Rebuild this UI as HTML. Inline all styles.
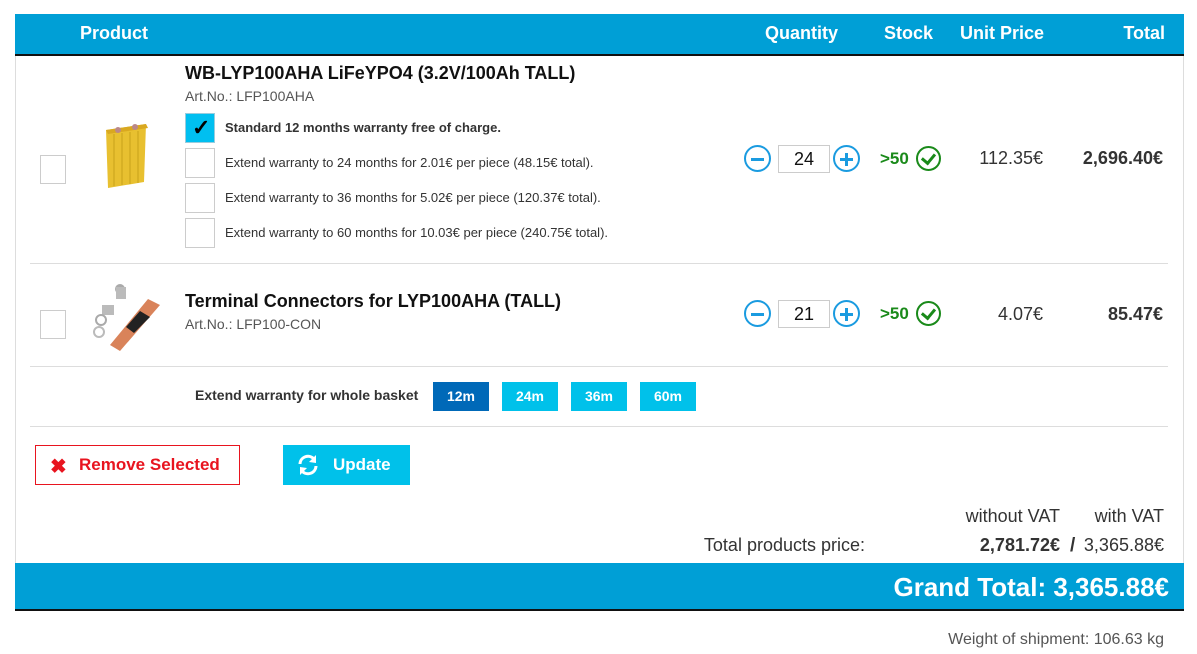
<!DOCTYPE html>
<html><head><meta charset="utf-8"><style>
*{margin:0;padding:0;box-sizing:border-box}
body{width:1197px;height:654px;background:#fff;font-family:"Liberation Sans",Arial,sans-serif;color:#333;position:relative;overflow:hidden}
.a{position:absolute;white-space:nowrap}
.hd{left:15px;top:14px;width:1169px;height:42px;background:#009fd6;border-bottom:2px solid #111}
.hd span{position:absolute;top:9px;color:#fff;font-weight:bold;font-size:18px}
.cb{position:absolute;width:30px;height:30px;border:1px solid #ccc;background:#fff}
.wt{font-size:13px;color:#333}
.qb{position:absolute;width:27px;height:27px;border:2px solid #1a9be0;border-radius:50%}
.qb:before{content:"";position:absolute;left:5px;top:10.5px;width:13px;height:3px;background:#1a9be0}
.qb.p:after{content:"";position:absolute;left:10px;top:5.5px;width:3px;height:13px;background:#1a9be0}
.qi{position:absolute;width:52px;height:28px;border:1px solid #ccc;text-align:center;font-size:18px;line-height:26px;color:#111}
.st{font-size:17px;font-weight:bold;color:#1a8a1a}
.ok{position:absolute;width:25px;height:25px;border:2.5px solid #1a8a1a;border-radius:50%}
.ok:after{content:"";position:absolute;left:6px;top:3px;width:6px;height:10px;border-right:3px solid #1a8a1a;border-bottom:3px solid #1a8a1a;transform:rotate(40deg)}
.wb{position:absolute;top:382px;width:56px;height:29px;background:#00c1ea;color:#fff;font-weight:bold;font-size:14px;text-align:center;line-height:29px}
.ln{position:absolute;height:1px;background:#ddd}
.p18{font-size:18px}
</style></head><body>
<div class="a hd"><span style="left:65px">Product</span><span style="left:750px">Quantity</span><span style="left:869px">Stock</span><span style="left:945px">Unit Price</span><span style="right:19px">Total</span></div>
<div class="a" style="left:15px;top:56px;width:1px;height:507px;background:#ddd"></div>
<div class="a" style="left:1183px;top:56px;width:1px;height:507px;background:#ddd"></div>

<div class="cb" style="left:40px;top:155px;width:26px;height:29px"></div>
<svg class="a" style="left:92px;top:120px" width="60" height="75"><polygon points="14,10 54,4 52,62 16,68" fill="#e8c030"/><polygon points="14,10 54,4 56,8 16,14" fill="#d9a820"/><circle cx="26" cy="10" r="3" fill="#b88"/><circle cx="43" cy="7" r="3" fill="#b88"/><g stroke="#c9a21a" stroke-width="1"><line x1="22" y1="14" x2="22" y2="66"/><line x1="30" y1="13" x2="30" y2="65"/><line x1="38" y1="12" x2="38" y2="64"/><line x1="46" y1="11" x2="46" y2="63"/></g></svg>
<div class="a" style="left:185px;top:63px;font-size:18px;font-weight:bold;color:#111">WB-LYP100AHA LiFeYPO4 (3.2V/100Ah TALL)</div>
<div class="a" style="left:185px;top:88px;font-size:14px;color:#555">Art.No.: LFP100AHA</div>
<div class="cb" style="left:185px;top:113px;background:#00bff0;border-color:#9cd"><span style="position:absolute;left:6px;top:1px;font-size:22px;color:#000;font-weight:bold">✓</span></div>
<div class="a wt" style="left:225px;top:120px;font-weight:bold">Standard 12 months warranty free of charge.</div>
<div class="cb" style="left:185px;top:148px"></div><div class="a wt" style="left:225px;top:155px">Extend warranty to 24 months for 2.01€ per piece (48.15€ total).</div>
<div class="cb" style="left:185px;top:183px"></div><div class="a wt" style="left:225px;top:190px">Extend warranty to 36 months for 5.02€ per piece (120.37€ total).</div>
<div class="cb" style="left:185px;top:218px"></div><div class="a wt" style="left:225px;top:225px">Extend warranty to 60 months for 10.03€ per piece (240.75€ total).</div>

<div class="qb" style="left:744px;top:145px"></div><div class="qi" style="left:778px;top:145px">24</div><div class="qb p" style="left:833px;top:145px"></div>
<div class="a st" style="left:880px;top:149px">&gt;50</div><div class="ok" style="left:916px;top:146px"></div>
<div class="a p18" style="right:154px;top:148px">112.35€</div>
<div class="a p18" style="right:34px;top:148px;font-weight:bold">2,696.40€</div>

<div class="ln" style="left:30px;top:263px;width:1138px"></div>

<div class="cb" style="left:40px;top:310px;width:26px;height:29px"></div>
<svg class="a" style="left:88px;top:275px" width="75" height="80"><circle cx="32" cy="14" r="5" fill="#aaa"/><rect x="28" y="12" width="10" height="12" fill="#bbb"/><rect x="14" y="30" width="12" height="10" fill="#bbb"/><circle cx="13" cy="45" r="5" fill="none" stroke="#aaa" stroke-width="2"/><circle cx="11" cy="57" r="5" fill="none" stroke="#bbb" stroke-width="2"/><polygon points="22,70 60,24 72,30 32,76" fill="#d9835a"/><polygon points="38,52 52,36 62,42 46,58" fill="#222"/></svg>
<div class="a" style="left:185px;top:291px;font-size:18px;font-weight:bold;color:#111">Terminal Connectors for LYP100AHA (TALL)</div>
<div class="a" style="left:185px;top:316px;font-size:14px;color:#555">Art.No.: LFP100-CON</div>
<div class="qb" style="left:744px;top:300px"></div><div class="qi" style="left:778px;top:300px">21</div><div class="qb p" style="left:833px;top:300px"></div>
<div class="a st" style="left:880px;top:304px">&gt;50</div><div class="ok" style="left:916px;top:301px"></div>
<div class="a p18" style="right:154px;top:304px">4.07€</div>
<div class="a p18" style="right:34px;top:304px;font-weight:bold">85.47€</div>

<div class="ln" style="left:30px;top:366px;width:1138px"></div>
<div class="a" style="left:195px;top:387px;font-size:14px;font-weight:bold">Extend warranty for whole basket</div>
<div class="wb" style="left:433px;background:#0069b8">12m</div>
<div class="wb" style="left:502px">24m</div>
<div class="wb" style="left:571px">36m</div>
<div class="wb" style="left:640px">60m</div>
<div class="ln" style="left:30px;top:426px;width:1138px"></div>

<div class="a" style="left:35px;top:445px;width:205px;height:40px;border:1px solid #e8141f"></div>
<div class="a" style="left:50px;top:454px;font-size:20px;font-weight:bold;color:#e8141f">✖</div>
<div class="a" style="left:79px;top:455px;font-size:17px;font-weight:bold;color:#e8141f">Remove Selected</div>
<div class="a" style="left:283px;top:445px;width:127px;height:40px;background:#00c1ea"></div>
<svg class="a" style="left:297px;top:454px" width="22" height="22" viewBox="0 0 22 22"><path d="M3 10 A8 8 0 0 1 17 5" fill="none" stroke="#fff" stroke-width="3"/><polygon points="19,1 19,9 12,8" fill="#fff"/><path d="M19 12 A8 8 0 0 1 5 17" fill="none" stroke="#fff" stroke-width="3"/><polygon points="3,21 3,13 10,14" fill="#fff"/></svg>
<div class="a" style="left:333px;top:455px;font-size:17px;font-weight:bold;color:#fff">Update</div>

<div class="a p18" style="right:137px;top:506px">without VAT</div>
<div class="a p18" style="right:33px;top:506px">with VAT</div>
<div class="a p18" style="right:332px;top:535px">Total products price:</div>
<div class="a p18" style="right:137px;top:535px;font-weight:bold">2,781.72€</div>
<div class="a" style="left:1070px;top:535px;font-size:19px;font-weight:bold">/</div>
<div class="a p18" style="right:33px;top:535px">3,365.88€</div>

<div class="a" style="left:15px;top:563px;width:1169px;height:48px;background:#009fd6;border-bottom:2px solid #111"></div>
<div class="a" style="right:28px;top:572px;font-size:26px;font-weight:bold;color:#fff">Grand Total: 3,365.88€</div>
<div class="a" style="right:33px;top:631px;font-size:16px;color:#555">Weight of shipment: 106.63 kg</div>
</body></html>
